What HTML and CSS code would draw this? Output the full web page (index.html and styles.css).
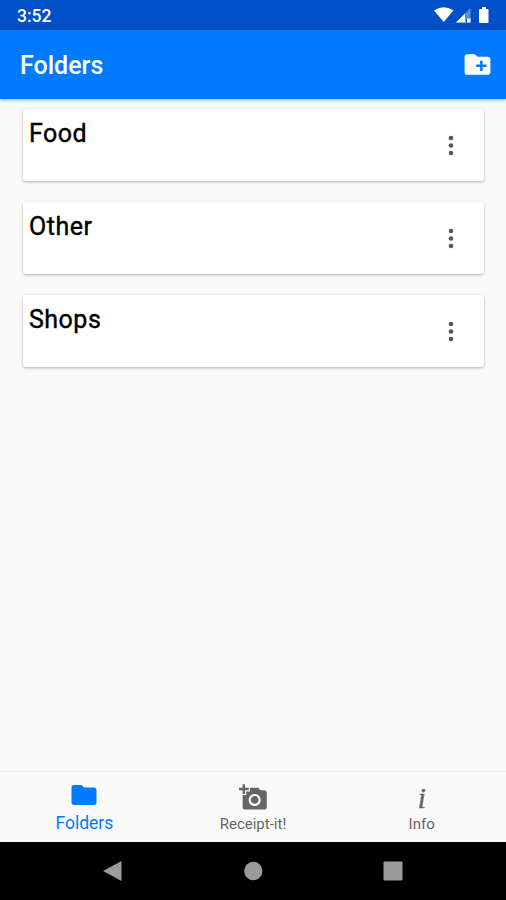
FILE: index.html
```
<!DOCTYPE html>
<html lang="en">
<head>
  <meta charset="UTF-8">
  <meta name="viewport" content="width=device-width, initial-scale=1.0">
  <title>Folders</title>
  <link rel="stylesheet" href="styles.css">
</head>
<body>
  <div class="app">

    <div class="status-bar">
      <span class="clock">3:52</span>
      <svg class="status-icons" width="56" height="18" viewBox="0 0 56 18" fill="#fff">
        <path d="M0 4.500Q9.700 -2 19.400 4.500L9.700 16z"/>
        <path d="M22 16.500L36.500 2V16.500z" opacity=".35"/>
        <path d="M22 16.500L31 7.500V12.500H36.500V16.500z"/>
        <path d="M31.500 12.500h1.500v4h-1.500z" fill="#0050c8"/>
        <path d="M48 1h4v2h1.500q1 0 1 1v12q0 1-1 1h-7.500q-1 0-1-1V4q0-1 1-1H48z"/>
      </svg>
    </div>

    <header class="toolbar">
      <h1>Folders</h1>
      <svg width="31" height="31" viewBox="0 0 24 24" fill="#fff">
        <path d="M20 6h-8l-2-2H4c-1.110 0-1.990.890-1.990 2L2 18c0 1.110.890 2 2 2h16c1.110 0 2-.890 2-2V8c0-1.110-.890-2-2-2zm-1 8h-3v3h-2v-3h-3v-2h3V9h2v3h3v2z"/>
      </svg>
    </header>

    <main class="folder-list">
      <div class="card">
        <h2>Food</h2>
        <svg class="more" width="6" height="22" viewBox="0 0 6 22"><circle cx="3" cy="4" r="2.300"/><circle cx="3" cy="11.500" r="2.300"/><circle cx="3" cy="19" r="2.300"/></svg>
      </div>
      <div class="card">
        <h2>Other</h2>
        <svg class="more" width="6" height="22" viewBox="0 0 6 22"><circle cx="3" cy="4" r="2.300"/><circle cx="3" cy="11.500" r="2.300"/><circle cx="3" cy="19" r="2.300"/></svg>
      </div>
      <div class="card">
        <h2>Shops</h2>
        <svg class="more" width="6" height="22" viewBox="0 0 6 22"><circle cx="3" cy="4" r="2.300"/><circle cx="3" cy="11.500" r="2.300"/><circle cx="3" cy="19" r="2.300"/></svg>
      </div>
    </main>

    <nav class="tabs">
      <div class="tab active">
        <div class="tab-icon">
          <svg width="30" height="30" viewBox="0 0 24 24" fill="currentColor">
            <path d="M10 4H4c-1.100 0-1.990.900-1.990 2L2 18c0 1.100.900 2 2 2h16c1.100 0 2-.900 2-2V8c0-1.100-.900-2-2-2h-8l-2-2z"/>
          </svg>
        </div>
        <span>Folders</span>
      </div>
      <div class="tab">
        <div class="tab-icon">
          <svg class="camera" width="29" height="29" viewBox="0 0 24 24" fill="currentColor">
            <path d="M3 4V1h2v3h3v2H5v3H3V6H0V4h3zm3 6V7h3V4h7l1.830 2H21c1.100 0 2 .900 2 2v12c0 1.100-.900 2-2 2H5c-1.100 0-2-.900-2-2V10h3zm7 9c2.760 0 5-2.240 5-5s-2.240-5-5-5-5 2.240-5 5 2.240 5 5 5zm-3.200-5c0 1.770 1.430 3.200 3.200 3.200s3.200-1.430 3.200-3.200-1.430-3.200-3.200-3.200-3.200 1.430-3.200 3.200z"/>
          </svg>
        </div>
        <span>Receipt-it!</span>
      </div>
      <div class="tab">
        <div class="tab-icon info-icon">i</div>
        <span>Info</span>
      </div>
    </nav>

    <div class="system-nav">
      <svg width="20" height="22" viewBox="0 0 20 22"><path d="M0 11L18.500 1V21z"/></svg>
      <svg width="20" height="22" viewBox="0 0 20 22"><circle cx="10.300" cy="11" r="9.200"/></svg>
      <svg width="20" height="22" viewBox="0 0 20 22"><rect x=".5" y="1.500" width="19" height="19" rx="1"/></svg>
    </div>

  </div>
</body>
</html>
```
FILE: styles.css
```
* {
  box-sizing: border-box;
}

body {
  margin: 0;
  font-family: Roboto, "Liberation Sans", sans-serif;
  background: #fafafa;
}

h1, h2 {
  margin: 0;
  font-weight: 500;
}

svg {
  display: block;
}

.app {
  display: flex;
  flex-direction: column;
  height: 900px;
}

.status-bar {
  display: flex;
  justify-content: space-between;
  height: 30px;
  padding: 6px 16px 0 17px;
  background: #0050c8;
  color: #fff;
}

.clock {
  font-size: 17.500px;
  font-weight: 500;
  line-height: 20px;
}

.toolbar {
  display: flex;
  align-items: center;
  justify-content: space-between;
  height: 69px;
  padding: 0 13px 0 20px;
  background: #007bff;
  color: #fff;
  box-shadow: 0 1px 4px rgba(0, 0, 0, 0.3);
}

.toolbar h1 {
  font-size: 25px;
  line-height: 30px;
  padding-top: 3px;
}

.folder-list {
  flex: 1;
  display: flex;
  flex-direction: column;
  gap: 21px;
  padding: 10px 22px 0 23px;
}

.card {
  display: flex;
  align-items: center;
  justify-content: space-between;
  height: 72px;
  padding: 0 30px 0 6px;
  background: #fff;
  border-radius: 3px;
  box-shadow: 0 1px 3px rgba(0, 0, 0, 0.3);
}

.card h2 {
  align-self: flex-start;
  padding-top: 10px;
  font-size: 25px;
  font-weight: 400;
  line-height: 30px;
  letter-spacing: 0.5px;
  color: #000;
  -webkit-text-stroke: 0.4px #000;
}

.more {
  fill: #555;
}

.tabs {
  display: flex;
  height: 71px;
  border-top: 1px solid #efefef;
  color: #666;
}

.tab {
  flex: 1;
  display: flex;
  flex-direction: column;
  align-items: center;
  padding-top: 8px;
  font-size: 15px;
}

.tab.active {
  font-size: 17.500px;
  color: #007bff;
}

.tab.active span {
  line-height: 18px;
}

.tab-icon {
  display: flex;
  justify-content: center;
  height: 34px;
}

.camera {
  margin-top: 3px;
}

.info-icon {
  font: italic 29px/36px "Liberation Serif", serif;
  -webkit-text-stroke: 0.5px #666;
}

.tab span {
  line-height: 20px;
}

.system-nav {
  display: flex;
  justify-content: center;
  gap: 120px;
  height: 58px;
  padding-top: 18px;
  background: #000;
}

.system-nav svg {
  fill: #9a9a9a;
}
```
